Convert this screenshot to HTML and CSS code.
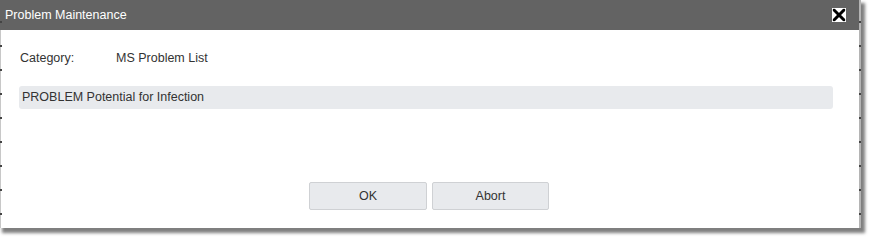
FILE: index.html
```html
<!DOCTYPE html>
<html>
<head>
<meta charset="utf-8">
<link rel="stylesheet" href="styles.css">
</head>
<body>
<div class="page">
<div class="dialog">
  <div class="titlebar">
    <span class="title">Problem Maintenance</span>
    <span class="close">
      <svg width="14" height="14" viewBox="0 0 14 14">
        <rect x="0.5" y="0.5" width="13" height="13" fill="#fff" stroke="#fff"/>
        <path d="M2 2 L12 12 M12 2 L2 12" stroke="#000" stroke-width="3" stroke-linecap="square"/>
        <rect x="0" y="0" width="14" height="14" fill="none" stroke="#fff" stroke-width="1.5"/>
      </svg>
    </span>
  </div>
  <div class="content">
    <div class="row">
      <span class="label">Category:</span>
      <span class="value">MS Problem List</span>
    </div>
    <div class="problem">PROBLEM Potential for Infection</div>
    <div class="buttons">
      <button class="btn">OK</button>
      <button class="btn">Abort</button>
    </div>
  </div>
</div>
</div>
</body>
</html>
```
FILE: styles.css
```css
html, body {
  margin: 0;
  padding: 0;
  background: #ffffff;
}
body {
  font-family: "Liberation Sans", Arial, sans-serif;
  font-size: 12.5px;
  color: #333;
}
.page {
  width: 870px;
  height: 239px;
  background: #fff;
}
.dialog {
  width: 859px;
  height: 228px;
  background: #fff;
  border-right: 2px solid #b4b4b4;
  box-sizing: content-box;
  box-shadow: 3px 4px 3px 1px rgba(0,0,0,0.5);
  position: relative;
  display: flex;
  flex-direction: column;
}
.dialog::before,
.dialog::after {
  content: "";
  position: absolute;
  top: 21px;
  bottom: 12px;
  width: 2px;
  background: repeating-linear-gradient(to bottom, #444 0, #444 2px, transparent 2px, transparent 24px);
}
.dialog::before { left: 0; }
.dialog::after { right: -2px; }
.titlebar {
  height: 30px;
  background: #636363;
  display: flex;
  align-items: center;
  justify-content: space-between;
  padding: 0 13px 0 5px;
  flex: none;
}
.title {
  color: #fff;
  font-size: 12.5px;
}
.close {
  display: flex;
  width: 14px;
  height: 14px;
  margin-top: -1px;
}
.content {
  flex: 1;
  padding: 0 26px 0 19px;
  display: flex;
  flex-direction: column;
  border-left: 1px solid #c8c8c8;
}
.row {
  display: flex;
  margin-top: 20px;
  height: 16px;
  line-height: 16px;
}
.label {
  width: 96px;
}
.problem {
  margin-top: 20px;
  margin-left: -1px;
  height: 23px;
  line-height: 22px;
  background: #e8eaed;
  border-radius: 3px;
  padding-left: 3px;
  color: #333;
}
.buttons {
  display: flex;
  justify-content: center;
  gap: 5px;
  margin-top: 73px;
  padding-left: 5px;
}
.btn {
  width: 118px;
  height: 28px;
  background: #e8eaed;
  border: 1px solid #cfd1d4;
  border-radius: 2px;
  font-family: "Liberation Sans", Arial, sans-serif;
  font-size: 12.5px;
  color: #333;
  padding: 0;
}
.btn + .btn {
  width: 117px;
}
```
